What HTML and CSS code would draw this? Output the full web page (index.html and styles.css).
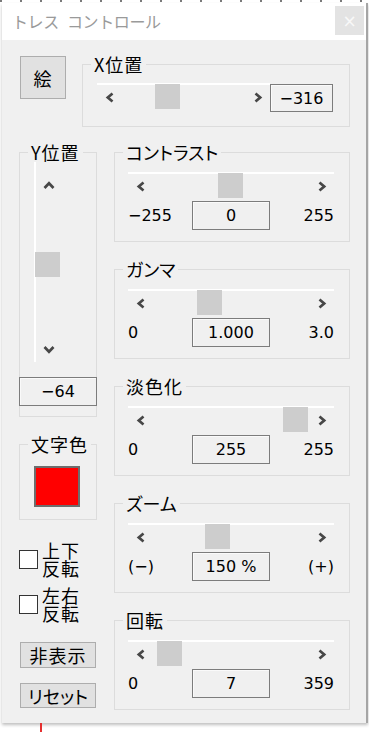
FILE: index.html
```html
<!DOCTYPE html>
<html lang="ja">
<head>
  <meta charset="UTF-8">
  <title>トレス コントロール</title>
  <link rel="stylesheet" href="styles.css">
</head>
<body>
  <div class="window">
    <!-- タイトルバー -->
    <div class="titlebar">
      <span class="title">トレス コントロール</span>
      <span class="close">×</span>
    </div>

    <div class="content">
      <!-- 上段: 絵ボタン + X位置 -->
      <div class="top-row">
        <button class="btn btn-pic">絵</button>
        <fieldset class="group group-x">
          <legend>X位置</legend>
          <div class="x-row">
            <div class="hslider">
              <span class="arrow"><svg width="10" height="11" viewBox="0 0 10 11"><polyline points="7.5,1.5 2.8,5.5 7.5,9.5"/></svg></span>
              <span class="thumb" style="left: 58px"></span>
              <span class="arrow"><svg width="10" height="11" viewBox="0 0 10 11"><polyline points="2.5,1.5 7.2,5.5 2.5,9.5"/></svg></span>
            </div>
            <div class="value">−316</div>
          </div>
        </fieldset>
      </div>

      <div class="main-row">
        <!-- 左列 -->
        <div class="left-col">
          <fieldset class="group group-y">
            <legend>Y位置</legend>
            <div class="vslider">
              <span class="varrow varrow-up"><svg width="12" height="9" viewBox="0 0 12 9"><polyline points="1.5,7 6,2.3 10.5,7"/></svg></span>
              <span class="thumb vthumb" style="top: 90px"></span>
              <span class="varrow"><svg width="12" height="9" viewBox="0 0 12 9"><polyline points="1.5,2 6,6.7 10.5,2"/></svg></span>
            </div>
            <div class="value value-y">−64</div>
          </fieldset>

          <fieldset class="group group-color">
            <legend>文字色</legend>
            <div class="swatch"></div>
          </fieldset>

          <label class="check">
            <span class="box"></span>
            <span class="check-text"><span class="line">上下</span><span class="line">反転</span></span>
          </label>
          <label class="check">
            <span class="box"></span>
            <span class="check-text"><span class="line">左右</span><span class="line">反転</span></span>
          </label>

          <button class="btn btn-side">非表示</button>
          <button class="btn btn-side btn-reset">リセット</button>
        </div>

        <!-- 右列 -->
        <div class="right-col">
          <fieldset class="group group-slider">
            <legend class="kana">コントラスト</legend>
            <div class="hslider">
              <span class="arrow"><svg width="10" height="11" viewBox="0 0 10 11"><polyline points="7.5,1.5 2.8,5.5 7.5,9.5"/></svg></span>
              <span class="thumb" style="left: 90px"></span>
              <span class="arrow"><svg width="10" height="11" viewBox="0 0 10 11"><polyline points="2.5,1.5 7.2,5.5 2.5,9.5"/></svg></span>
            </div>
            <div class="vals">
              <span>−255</span>
              <div class="value">0</div>
              <span class="max">255</span>
            </div>
          </fieldset>

          <fieldset class="group group-slider">
            <legend class="kana">ガンマ</legend>
            <div class="hslider">
              <span class="arrow"><svg width="10" height="11" viewBox="0 0 10 11"><polyline points="7.5,1.5 2.8,5.5 7.5,9.5"/></svg></span>
              <span class="thumb" style="left: 69px"></span>
              <span class="arrow"><svg width="10" height="11" viewBox="0 0 10 11"><polyline points="2.5,1.5 7.2,5.5 2.5,9.5"/></svg></span>
            </div>
            <div class="vals">
              <span>0</span>
              <div class="value">1.000</div>
              <span class="max">3.0</span>
            </div>
          </fieldset>

          <fieldset class="group group-slider">
            <legend>淡色化</legend>
            <div class="hslider">
              <span class="arrow"><svg width="10" height="11" viewBox="0 0 10 11"><polyline points="7.5,1.5 2.8,5.5 7.5,9.5"/></svg></span>
              <span class="thumb" style="left: 155px"></span>
              <span class="arrow"><svg width="10" height="11" viewBox="0 0 10 11"><polyline points="2.5,1.5 7.2,5.5 2.5,9.5"/></svg></span>
            </div>
            <div class="vals">
              <span>0</span>
              <div class="value">255</div>
              <span class="max">255</span>
            </div>
          </fieldset>

          <fieldset class="group group-slider">
            <legend class="kana">ズーム</legend>
            <div class="hslider">
              <span class="arrow"><svg width="10" height="11" viewBox="0 0 10 11"><polyline points="7.5,1.5 2.8,5.5 7.5,9.5"/></svg></span>
              <span class="thumb" style="left: 77px"></span>
              <span class="arrow"><svg width="10" height="11" viewBox="0 0 10 11"><polyline points="2.5,1.5 7.2,5.5 2.5,9.5"/></svg></span>
            </div>
            <div class="vals">
              <span>(−)</span>
              <div class="value">150 %</div>
              <span class="max">(+)</span>
            </div>
          </fieldset>

          <fieldset class="group group-slider">
            <legend>回転</legend>
            <div class="hslider">
              <span class="arrow"><svg width="10" height="11" viewBox="0 0 10 11"><polyline points="7.5,1.5 2.8,5.5 7.5,9.5"/></svg></span>
              <span class="thumb" style="left: 29px"></span>
              <span class="arrow"><svg width="10" height="11" viewBox="0 0 10 11"><polyline points="2.5,1.5 7.2,5.5 2.5,9.5"/></svg></span>
            </div>
            <div class="vals">
              <span>0</span>
              <div class="value">7</div>
              <span class="max">359</span>
            </div>
          </fieldset>
        </div>
      </div>
    </div>
  </div>
  <div class="desk-line"></div>
</body>
</html>
```

FILE: styles.css
```css
:root {
  --face: #f0f0f0;
  --group-border: #dcdcdc;
  --btn-bg: #e1e1e1;
  --btn-border: #adadad;
  --thumb: #cdcdcd;
  --arrow: #474747;
}

body {
  margin: 0;
  padding: 3px 0 0 2px;
  background: repeating-linear-gradient(90deg, #7a7a7a 0 2px, transparent 2px 20px) 0 0 / 100% 2px no-repeat #fff;
  font-family: "Noto Sans CJK JP", sans-serif;
  color: #000;
}

.window {
  width: 364px;
  border-right: 2px solid #a5a5a5;
  background: var(--face);
  box-shadow: 0 2px 3px rgba(0, 0, 0, 0.25);
}

/* title bar */
.titlebar {
  height: 37px;
  background: #fff;
  display: flex;
  justify-content: space-between;
  padding: 0 2px 0 10px;
}

.title {
  font-size: 16px;
  line-height: 37px;
  letter-spacing: -0.4px;
  word-spacing: 5px;
  color: #9a9a9a;
}

.close {
  width: 29px;
  height: 29px;
  margin-top: 3px;
  background: #e3e3e3;
  color: #f8f8f8;
  font-family: "DejaVu Sans", sans-serif;
  font-size: 17px;
  display: flex;
  align-items: center;
  justify-content: center;
}

.content {
  padding: 14px 16px 13px 17px;
}

/* buttons */
.btn {
  font-family: "Noto Sans CJK JP", sans-serif;
  font-size: 18px;
  line-height: 1;
  letter-spacing: 1px;
  color: #000;
  background: var(--btn-bg);
  border: 1px solid var(--btn-border);
  padding: 0;
}

.btn-pic {
  width: 46px;
  height: 43px;
  margin: 2px 0 0 1px;
  flex: none;
}

.btn-side {
  width: 76px;
  height: 26px;
  margin: 20px 0 0 1px;
}

.btn-reset {
  height: 25px;
  margin-top: 15px;
  letter-spacing: 0;
  font-feature-settings: "palt";
}

/* group boxes */
.group {
  border: 1px solid var(--group-border);
  margin: 0;
  padding: 0;
  min-width: 0;
}

.group legend {
  font-size: 18px;
  line-height: 20px;
  letter-spacing: 1px;
  white-space: nowrap;
  padding: 0 3px;
  margin-left: 8px;
}

.group legend.kana {
  letter-spacing: 0;
  font-feature-settings: "palt";
}

.top-row {
  display: flex;
  align-items: flex-start;
}

.group-x {
  flex: 1;
  margin-left: 16px;
  padding: 9px 16px 14px 14px;
}

.group-x legend {
  margin-left: -6px;
}

.x-row {
  display: flex;
  align-items: flex-start;
}

.x-row .value {
  width: 63px;
  height: 28px;
  margin-top: 1px;
  flex: none;
}

/* sliders */
.hslider {
  flex: 1;
  position: relative;
  height: 24px;
  border-top: 2px solid #fff;
  display: flex;
  justify-content: space-between;
}

.arrow {
  width: 25px;
  height: 24px;
  display: flex;
  align-items: center;
  justify-content: center;
}

.arrow svg,
.varrow svg {
  fill: none;
  stroke: var(--arrow);
  stroke-width: 2.7;
}

.thumb {
  position: absolute;
  top: -1px;
  width: 25px;
  height: 25px;
  background: var(--thumb);
}

.vslider {
  position: relative;
  width: 25px;
  height: 200px;
  margin-left: 14px;
  border-left: 2px solid #fff;
  display: flex;
  flex-direction: column;
  justify-content: space-between;
}

.varrow {
  height: 25px;
  display: flex;
  align-items: center;
  justify-content: center;
}

.varrow-up {
  margin-top: 11px;
}

.vthumb {
  left: -1px;
}

/* value boxes */
.value {
  box-sizing: border-box;
  border: 1px solid #7c7c7c;
  box-shadow: inset 1px 1px 0 #fafafa;
  font-family: "DejaVu Sans", sans-serif;
  font-size: 16px;
  display: flex;
  align-items: center;
  justify-content: center;
}

.main-row {
  display: flex;
  align-items: flex-start;
  gap: 17px;
  margin-top: 15px;
}

.left-col {
  width: 78px;
  display: flex;
  flex-direction: column;
}

.right-col {
  flex: 1;
  display: flex;
  flex-direction: column;
  gap: 17px;
}

.group-slider {
  padding: 10px 15px 11px 13px;
}

.group-slider legend {
  margin-left: -5px;
}

.vals {
  display: grid;
  grid-template-columns: 1fr 78px 1fr;
  align-items: center;
  margin-top: 3px;
  font-family: "DejaVu Sans", sans-serif;
  font-size: 16px;
}

.vals .value {
  height: 29px;
}

.vals .max {
  justify-self: end;
}

.group-y {
  padding: 0 0 10px 0;
}

.value-y {
  height: 29px;
  margin: 15px -1px 0;
}

.group-color {
  margin-top: 17px;
  padding: 12px 0 12px 0;
}

.swatch {
  box-sizing: border-box;
  width: 46px;
  height: 41px;
  margin-left: 14px;
  background: #ff0000;
  border: 2px solid #6d6d6d;
}

/* check boxes */
.check {
  display: flex;
  align-items: center;
  margin-top: 21px;
  font-size: 18px;
  letter-spacing: 1px;
}

.check + .check {
  margin-top: 9px;
}

.check-text .line {
  display: block;
  height: 18px;
  line-height: 18px;
}

.box {
  box-sizing: border-box;
  width: 19px;
  height: 19px;
  margin-right: 4px;
  border: 1px solid #333;
  background: #fff;
}

.desk-line {
  width: 2px;
  height: 12px;
  margin-left: 38px;
  background: #e53030;
}
```
